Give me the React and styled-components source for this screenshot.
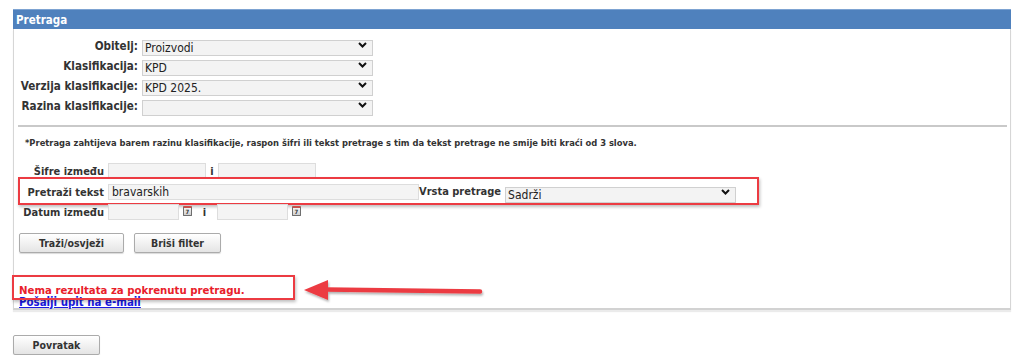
import React from "react";
import styled, { createGlobalStyle } from "styled-components";

const GlobalStyle = createGlobalStyle`
  html, body {
    margin: 0;
    padding: 0;
    background: #ffffff;
  }
  body {
    font-family: "DejaVu Sans Condensed", "DejaVu Sans", sans-serif;
    color: #333333;
  }
`;

const Page = styled.div`
  width: 998px;
  padding: 9px 0 0 13px;
`;

const Panel = styled.div`
  width: 998px;
`;

const PanelHeader = styled.div`
  height: 20px;
  line-height: 20px;
  background: #4f81bd;
  border-top: 1px solid #7da3d2;
  box-sizing: border-box;
  color: #ffffff;
  font-weight: bold;
  font-size: 11.5px;
  padding-left: 3px;
`;

const PanelBody = styled.div`
  height: 281px;
  box-sizing: border-box;
  border-left: 1px solid #d6d6d6;
  border-right: 1px solid #d6d6d6;
  border-bottom: 2px solid #d2d2d2;
  box-shadow: 0 2px 1px rgba(0, 0, 0, 0.08);
  padding-top: 8px;
`;

const TopForm = styled.div`
  display: grid;
  grid-template-columns: 124px 231px;
  column-gap: 4px;
  row-gap: 4px;
`;

const Label = styled.label`
  display: flex;
  align-items: center;
  justify-content: flex-end;
  height: 16px;
  padding-top: 1px;
  box-sizing: border-box;
  font-size: 11.6px;
  font-weight: bold;
  color: #333;
  white-space: nowrap;
`;

const SelectWrap = styled.div`
  position: relative;
  width: ${(p) => p.$w}px;
  height: 16px;
`;

const Select = styled.select`
  appearance: none;
  width: 100%;
  height: 100%;
  margin: 0;
  box-sizing: border-box;
  border: 1px solid #d0d0d0;
  background: #f3f3f3;
  font-family: inherit;
  font-size: 12px;
  color: #222;
  padding: 0 2px;
  outline: none;
`;

const Chevron = styled.svg`
  position: absolute;
  right: 6px;
  top: 5px;
  pointer-events: none;
`;

const Divider = styled.div`
  height: 2px;
  background: #c9c9c9;
  margin: 12px 3px 0 4px;
`;

const Note = styled.div`
  font-size: 9.3px;
  font-weight: bold;
  color: #333;
  margin: 10px 0 0 11px;
  line-height: 12px;
`;

const LowerForm = styled.div`
  margin-top: 14px;
  display: flex;
  flex-direction: column;
  gap: 4px;
`;

const Row = styled.div`
  position: relative;
  display: flex;
  align-items: center;
  height: ${(p) => p.$h || 16}px;
`;

const RowLabel = styled(Label)`
  width: 90px;
  flex: none;
  margin-right: 4px;
  font-size: 11px;
`;

const TextInput = styled.input`
  width: ${(p) => p.$w}px;
  height: 16px;
  box-sizing: border-box;
  margin: 0;
  border: 1px solid #dddddd;
  background: #f4f4f4;
  font-family: inherit;
  font-size: 12px;
  color: #222;
  padding: 0 3px;
  outline: none;
`;

const And = styled.span`
  font-size: 11px;
  font-weight: bold;
  width: ${(p) => p.$w || 12}px;
  text-align: center;
`;

const CalIcon = styled.span`
  display: inline-flex;
  align-items: center;
  justify-content: center;
  width: 9px;
  height: 10px;
  box-sizing: border-box;
  border: 1px solid #6e6e6e;
  border-top: 2px solid #c8514b;
  border-radius: 1px;
  background: linear-gradient(#f4f4f4, #cfcfcf);
  font-size: 6px;
  font-weight: bold;
  color: #333;
  margin-left: ${(p) => p.$ml || 0}px;
  align-self: flex-start;
  margin-top: 2px;
`;

const Annotation = styled.div`
  position: absolute;
  left: ${(p) => p.$x}px;
  top: ${(p) => p.$y}px;
  width: ${(p) => p.$w}px;
  height: ${(p) => p.$h}px;
  box-sizing: border-box;
  border: 2px solid #ec3b42;
  box-shadow: 1px 2px 3px rgba(0, 0, 0, 0.25);
  pointer-events: none;
`;

const InlineLabel = styled.span`
  font-size: 11px;
  font-weight: bold;
  color: #333;
  margin: 0 4px 0 0;
  white-space: nowrap;
`;

const ButtonRow = styled.div`
  display: flex;
  gap: 10px;
  margin: 13px 0 0 5px;
`;

const Button = styled.button`
  width: ${(p) => p.$w}px;
  height: 20px;
  margin: 0;
  box-sizing: border-box;
  border: 1px solid #ababab;
  border-radius: 2px;
  background: linear-gradient(#ffffff, #e4e4e4);
  box-shadow: 0 1px 1px rgba(0, 0, 0, 0.15);
  font-family: inherit;
  font-size: 10.5px;
  font-weight: bold;
  color: #333;
  padding: 0;
`;

const Messages = styled.div`
  position: relative;
  margin: 31px 0 0 5px;
`;

const ErrorText = styled.div`
  font-size: 11.3px;
  font-weight: bold;
  color: #e8202a;
  line-height: 13px;
`;

const MailLink = styled.a`
  display: block;
  font-size: 11.4px;
  font-weight: bold;
  color: #1a1ae0;
  text-decoration: underline;
  line-height: 11px;
  width: max-content;
`;

const Arrow = styled.svg`
  position: absolute;
  left: 283px;
  top: -6px;
  overflow: visible;
`;

const Footer = styled.div`
  margin-top: 24px;
`;

const ChevronIcon = () => (
  <Chevron width="9" height="6" viewBox="0 0 9 6">
    <path d="M1 1 L4.5 4.5 L8 1" fill="none" stroke="#111" strokeWidth="2" />
  </Chevron>
);

const Dropdown = ({ w, value }) => (
  <SelectWrap $w={w}>
    <Select defaultValue={value}>
      <option value={value}>{value}</option>
    </Select>
    <ChevronIcon />
  </SelectWrap>
);

export default function App() {
  return (
    <>
      <GlobalStyle />
      <Page>
        <Panel>
          <PanelHeader>Pretraga</PanelHeader>
          <PanelBody>
            <TopForm>
              <Label>Obitelj:</Label>
              <Dropdown w={231} value="Proizvodi" />
              <Label>Klasifikacija:</Label>
              <Dropdown w={231} value="KPD" />
              <Label>Verzija klasifikacije:</Label>
              <Dropdown w={231} value="KPD 2025." />
              <Label>Razina klasifikacije:</Label>
              <Dropdown w={231} value="" />
            </TopForm>

            <Divider />

            <Note>
              *Pretraga zahtijeva barem razinu klasifikacije, raspon šifri ili
              tekst pretrage s tim da tekst pretrage ne smije biti kraći od 3
              slova.
            </Note>

            <LowerForm>
              <Row>
                <RowLabel>Šifre između</RowLabel>
                <TextInput $w={98} />
                <And>i</And>
                <TextInput $w={98} />
              </Row>
              <Row $h={17}>
                <RowLabel>Pretraži tekst</RowLabel>
                <TextInput $w={311} defaultValue="bravarskih" />
                <InlineLabel>Vrsta pretrage</InlineLabel>
                <Dropdown w={231} value="Sadrži" />
                <Annotation $x={4} $y={-6} $w={741} $h={28} />
              </Row>
              <Row>
                <RowLabel>Datum između</RowLabel>
                <TextInput $w={71} />
                <CalIcon $ml={4}>7</CalIcon>
                <And $w={25}>i</And>
                <TextInput $w={71} />
                <CalIcon $ml={4}>7</CalIcon>
              </Row>
            </LowerForm>

            <ButtonRow>
              <Button $w={105}>Traži/osvježi</Button>
              <Button $w={87}>Briši filter</Button>
            </ButtonRow>

            <Messages>
              <ErrorText>Nema rezultata za pokrenutu pretragu.</ErrorText>
              <MailLink href="#">Pošalji upit na e-mail</MailLink>
              <Annotation $x={-7} $y={-9} $w={283} $h={25} />
              <Arrow width="180" height="26" viewBox="0 0 180 26">
                <defs>
                  <filter id="sh" x="-10%" y="-50%" width="130%" height="200%">
                    <feDropShadow dx="1" dy="2" stdDeviation="1.2" floodOpacity="0.3" />
                  </filter>
                </defs>
                <g filter="url(#sh)">
                  <path
                    d="M24 11.5 L178 13.5"
                    stroke="#ec3b42"
                    strokeWidth="4.5"
                    strokeLinecap="round"
                  />
                  <path d="M26 2 L26 22 L2 12 Z" fill="#ec3b42" />
                </g>
              </Arrow>
            </Messages>
          </PanelBody>
        </Panel>
        <Footer>
          <Button $w={87}>Povratak</Button>
        </Footer>
      </Page>
    </>
  );
}
